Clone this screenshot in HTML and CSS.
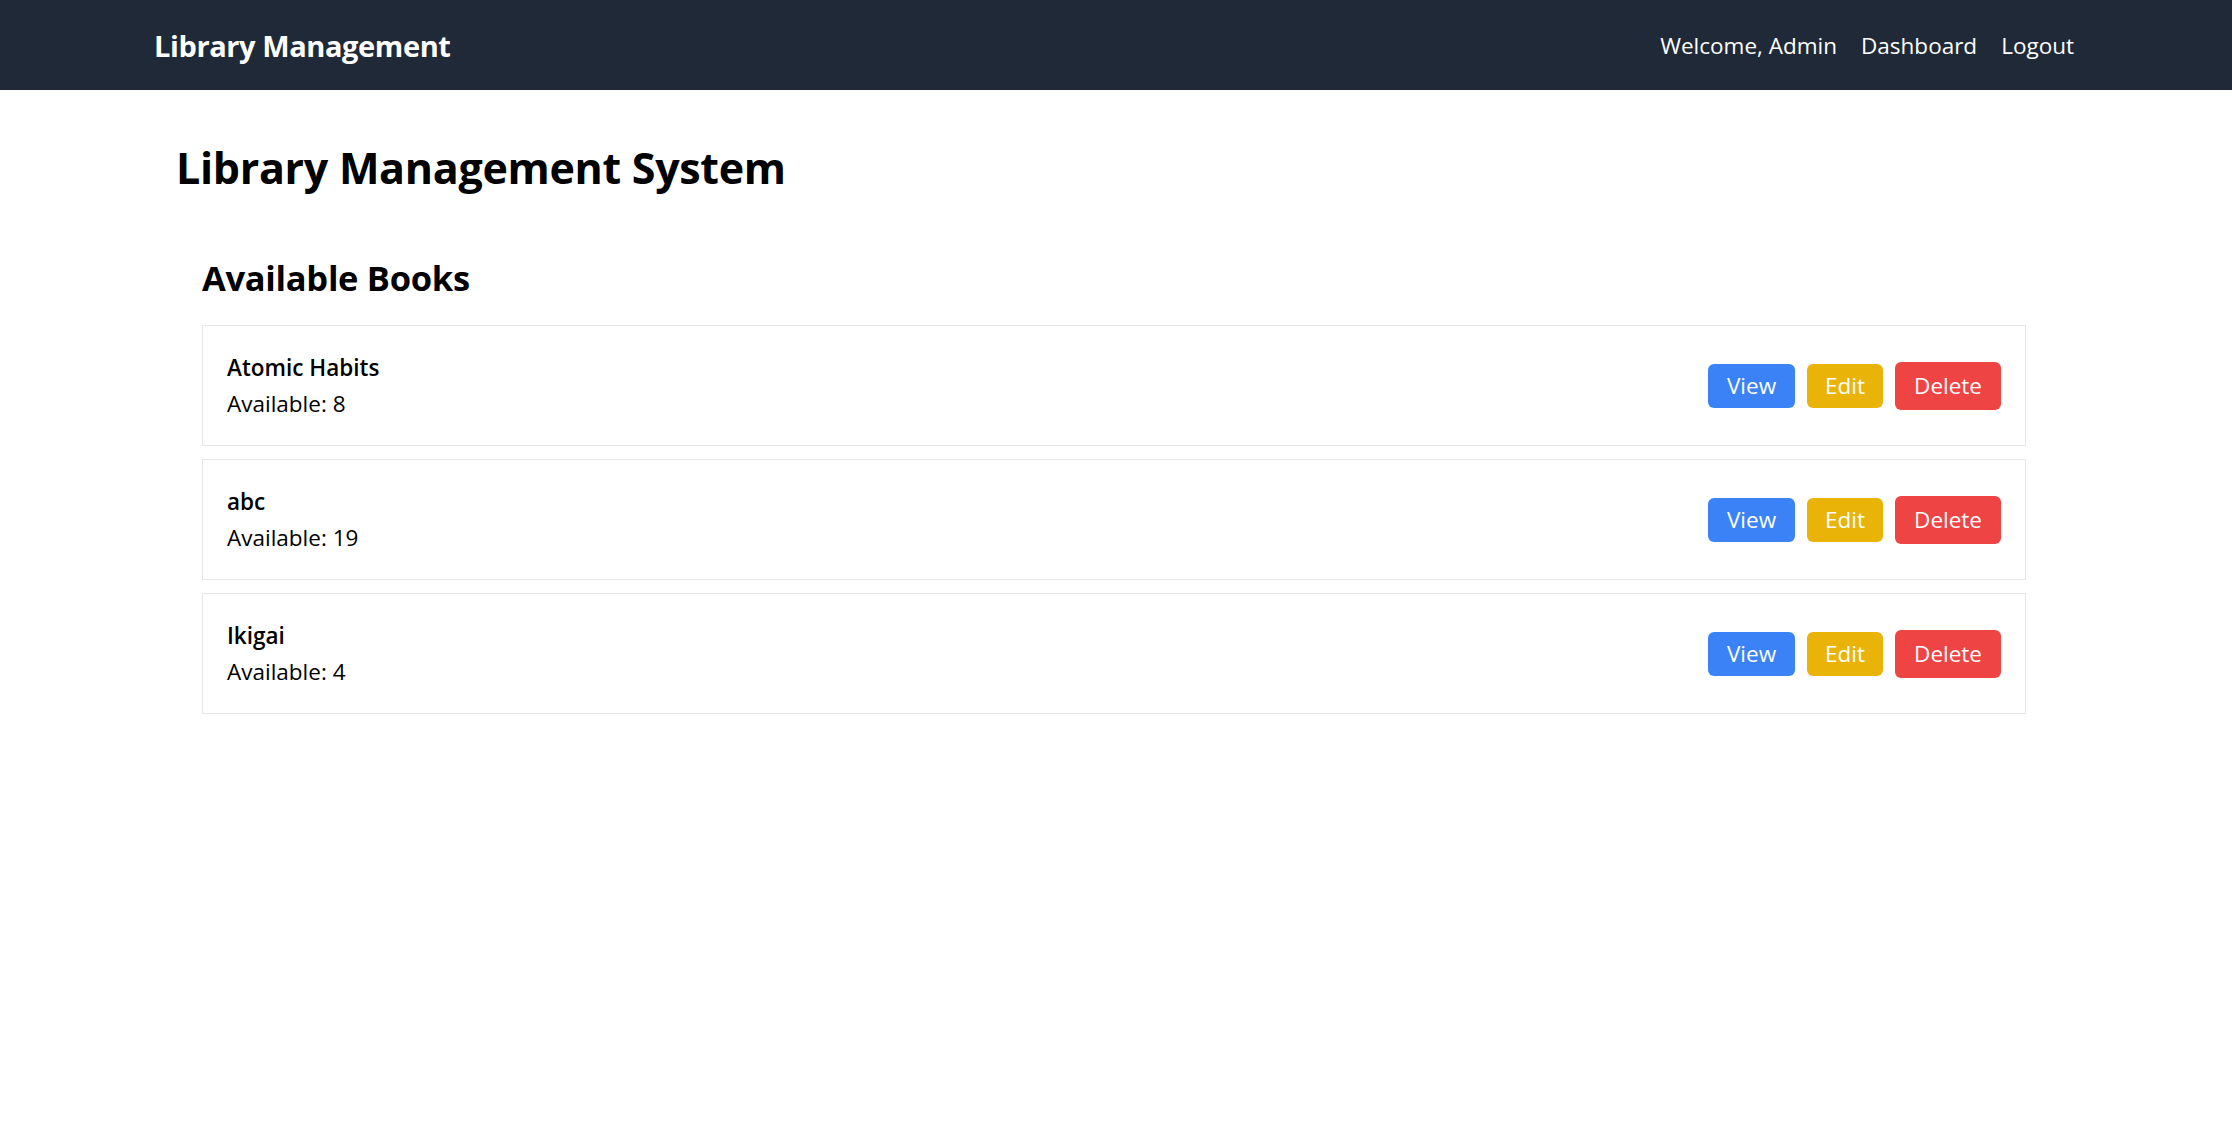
FILE: index.html
```html
<!DOCTYPE html>
<html lang="en">
<head>
<meta charset="utf-8">
<title>Library Management</title>
<link rel="stylesheet" href="styles.css">
</head>
<body>
<nav class="navbar">
  <div class="nav-inner">
    <div class="brand">Library Management</div>
    <div class="nav-links">
      <span class="nav-item">Welcome, Admin</span>
      <a class="nav-item" href="#">Dashboard</a>
      <a class="nav-item" href="#">Logout</a>
    </div>
  </div>
</nav>
<main class="main">
  <h1 class="page-title">Library Management System</h1>
  <section class="books">
    <h2 class="section-title">Available Books</h2>
    <div class="book-list">
      <div class="book-card">
        <div class="book-info">
          <div class="book-title">Atomic Habits</div>
          <div class="book-avail">Available: 8</div>
        </div>
        <div class="actions">
          <button class="btn btn-view">View</button>
          <button class="btn btn-edit">Edit</button>
          <button class="btn btn-delete">Delete</button>
        </div>
      </div>
      <div class="book-card">
        <div class="book-info">
          <div class="book-title">abc</div>
          <div class="book-avail">Available: 19</div>
        </div>
        <div class="actions">
          <button class="btn btn-view">View</button>
          <button class="btn btn-edit">Edit</button>
          <button class="btn btn-delete">Delete</button>
        </div>
      </div>
      <div class="book-card">
        <div class="book-info">
          <div class="book-title">Ikigai</div>
          <div class="book-avail">Available: 4</div>
        </div>
        <div class="actions">
          <button class="btn btn-view">View</button>
          <button class="btn btn-edit">Edit</button>
          <button class="btn btn-delete">Delete</button>
        </div>
      </div>
    </div>
  </section>
</main>
</body>
</html>
```
FILE: styles.css
```css
* { box-sizing: border-box; }
body {
  margin: 0;
  font-family: "Open Sans", "Noto Sans", sans-serif;
  color: #000;
  background: #fff;
}
.navbar {
  background: #1f2937;
  height: 90px;
}
.nav-inner {
  max-width: 1924px;
  margin: 0 auto;
  padding-right: 4px;
  height: 100%;
  display: flex;
  align-items: center;
  justify-content: space-between;
}
.brand {
  color: #fff;
  font-size: 29px;
  font-weight: 700;
  letter-spacing: -0.4px;
}
.nav-links {
  display: flex;
  gap: 24px;
}
.nav-item {
  color: #fff;
  font-size: 22.5px;
  text-decoration: none;
}
.main {
  max-width: 1880px;
  margin: 0 auto;
}
.page-title {
  margin: 51px 0 0;
  font-size: 43px;
  line-height: 54px;
  font-weight: 700;
  letter-spacing: -0.3px;
}
.books {
  padding: 0 30px 0 26px;
}
.section-title {
  margin: 61px 0 25px;
  font-size: 34.5px;
  line-height: 44px;
  font-weight: 700;
  letter-spacing: -0.3px;
}
.book-list {
  display: flex;
  flex-direction: column;
  gap: 13px;
}
.book-card {
  border: 1px solid #e5e7eb;
  padding: 24px 24px 23px;
  display: flex;
  align-items: center;
  justify-content: space-between;
}
.book-title {
  font-size: 22.5px;
  line-height: 36px;
  font-weight: 600;
}
.book-avail {
  font-size: 22.5px;
  line-height: 36px;
}
.actions {
  display: flex;
  align-items: center;
  gap: 12px;
}
.btn {
  border: none;
  color: #fff;
  font-family: inherit;
  font-size: 22.5px;
  line-height: 32px;
  padding: 6px 19px;
  border-radius: 6px;
  cursor: pointer;
}
.btn-view { background: #3b82f6; }
.btn-edit { background: #eab308; padding: 6px 18px; }
.btn-delete { background: #ef4444; padding: 8px 19px; }
```
